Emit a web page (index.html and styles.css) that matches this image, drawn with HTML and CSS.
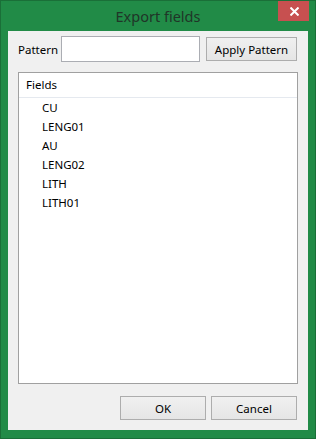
FILE: index.html
```html
<!DOCTYPE html>
<html lang="en">
<head>
  <meta charset="UTF-8" />
  <title>Export fields</title>
  <link rel="stylesheet" href="styles.css">
</head>
<body>
  <div class="window">
    <div class="titlebar">
      <span class="title">Export fields</span>
      <button class="close-btn" aria-label="Close">
        <svg width="9" height="9" viewBox="0 0 9 9">
          <path d="M0.5 0.5 L8.5 8.5 M8.5 0.5 L0.5 8.5" stroke="#fff" stroke-width="2" fill="none"/>
        </svg>
      </button>
    </div>

    <div class="client">
      <div class="pattern-row">
        <label for="pattern">Pattern</label>
        <input type="text" id="pattern">
        <button class="btn apply-btn">Apply Pattern</button>
      </div>

      <div class="tree">
        <div class="tree-header">Fields</div>
        <ul class="tree-items">
          <li>CU</li>
          <li>LENG01</li>
          <li>AU</li>
          <li>LENG02</li>
          <li>LITH</li>
          <li>LITH01</li>
        </ul>
      </div>

      <div class="actions">
        <button class="btn">OK</button>
        <button class="btn">Cancel</button>
      </div>
    </div>
  </div>
</body>
</html>
```

FILE: styles.css
```css
body {
  margin: 0;
  font-family: "Noto Sans", "Open Sans", sans-serif;
  font-size: 11.5px;
  color: #000;
}
.window {
  width: 316px;
  height: 439px;
  box-sizing: border-box;
  background: #218b47;
  border: 1px solid #1a6f38;
  display: flex;
  flex-direction: column;
}
.titlebar {
  position: relative;
  height: 30px;
  display: flex;
  justify-content: center;
  align-items: center;
}
.title {
  font-size: 14.5px;
  color: #203528;
  margin-top: 0;
}
.close-btn {
  position: absolute;
  top: 0;
  right: 6px;
  width: 31px;
  height: 20px;
  padding: 0 0 0 2px;
  border: none;
  background: #c75050;
  display: flex;
  align-items: center;
  justify-content: center;
}
.client {
  flex: 1;
  margin: 0 7px 8px 7px;
  background: #f0f0f0;
  padding: 5px 10px 10px 10px;
  display: flex;
  flex-direction: column;
}
.pattern-row {
  display: flex;
  align-items: center;
  height: 26px;
}
.pattern-row label {
  width: 43px;
}
.pattern-row input {
  width: 139px;
  height: 26px;
  box-sizing: border-box;
  margin: 0;
  border: 1px solid #abadb3;
  background: #fff;
}
.btn {
  height: 24px;
  box-sizing: border-box;
  border: 1px solid #adadad;
  background: linear-gradient(#f0f0f0, #e5e5e5);
  font-family: inherit;
  font-size: 11.5px;
  color: #000;
  padding: 0;
}
.apply-btn {
  width: 91px;
  margin-left: 6px;
}
.tree {
  margin-top: 10px;
  height: 312px;
  box-sizing: border-box;
  border: 1px solid #a0a0a0;
  background: #fff;
}
.tree-header {
  height: 24px;
  line-height: 24px;
  padding-left: 7px;
  border-bottom: 1px solid #e5e9ef;
  background: #fff;
}
.tree-items {
  list-style: none;
  margin: 0;
  padding: 0;
}
.tree-items li {
  height: 19px;
  line-height: 19px;
  padding-left: 23px;
}
.actions {
  margin-top: 12px;
  display: flex;
  justify-content: flex-end;
  gap: 5px;
  padding-right: 1px;
}
.actions .btn {
  width: 86px;
}
```
